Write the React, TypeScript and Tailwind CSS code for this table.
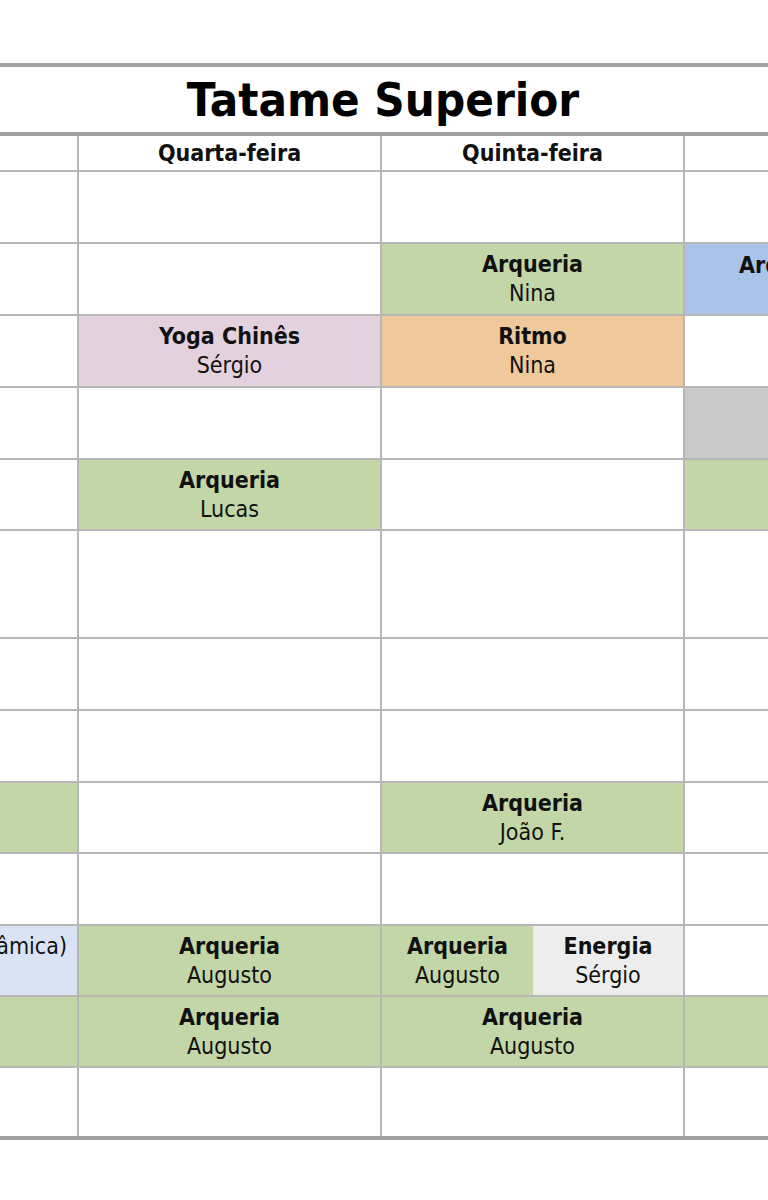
import React from "react";

type Slot = {
  bg?: string;
  title?: string;
  name?: string;
};

type Row = {
  h: string;
  left?: Slot;
  quarta?: Slot;
  quinta?: Slot | [Slot, Slot];
  right?: Slot;
  leftText?: string;
  rightText?: string;
};

const GREEN = "bg-[#c3d6a8]";
const PINK = "bg-[#e3d2dd]";
const ORANGE = "bg-[#efc99b]";
const BLUE = "bg-[#a9c4e8]";
const GRAY = "bg-[#c9c9c9]";
const LIGHT = "bg-[#ededed]";
const LIGHTBLUE = "bg-[#d9e3f3]";

const rows: Row[] = [
  { h: "h-[72px]" },
  {
    h: "h-[72px]",
    quinta: { bg: GREEN, title: "Arqueria", name: "Nina" },
    right: { bg: BLUE },
    rightText: "Arqueria Dinâmica",
  },
  {
    h: "h-[72px]",
    quarta: { bg: PINK, title: "Yoga Chinês", name: "Sérgio" },
    quinta: { bg: ORANGE, title: "Ritmo", name: "Nina" },
  },
  { h: "h-[72px]", right: { bg: GRAY } },
  {
    h: "h-[71px]",
    quarta: { bg: GREEN, title: "Arqueria", name: "Lucas" },
    right: { bg: GREEN },
  },
  { h: "h-[108px]" },
  { h: "h-[72px]" },
  { h: "h-[72px]" },
  {
    h: "h-[71px]",
    left: { bg: GREEN },
    quinta: { bg: GREEN, title: "Arqueria", name: "João F." },
  },
  { h: "h-[72px]" },
  {
    h: "h-[71px]",
    left: { bg: LIGHTBLUE },
    leftText: "Yoga (Dinâmica)",
    quarta: { bg: GREEN, title: "Arqueria", name: "Augusto" },
    quinta: [
      { bg: GREEN, title: "Arqueria", name: "Augusto" },
      { bg: LIGHT, title: "Energia", name: "Sérgio" },
    ],
  },
  {
    h: "h-[71px]",
    left: { bg: GREEN },
    quarta: { bg: GREEN, title: "Arqueria", name: "Augusto" },
    quinta: { bg: GREEN, title: "Arqueria", name: "Augusto" },
    right: { bg: GREEN },
  },
  { h: "h-[68px]" },
];

function Lesson({ slot, className }: { slot?: Slot; className?: string }) {
  return (
    <div
      className={`flex flex-col items-center justify-center text-[23px] leading-[29px] text-[#111] ${
        slot?.bg ?? "bg-white"
      } ${className ?? ""}`}
    >
      {slot?.title && <div className="font-bold">{slot.title}</div>}
      {slot?.name && <div>{slot.name}</div>}
    </div>
  );
}

export default function App() {
  return (
    <div className="w-[768px] h-[1200px] bg-white pt-[63px] overflow-hidden font-['DejaVu_Sans_Condensed','DejaVu_Sans',sans-serif] [font-stretch:semi-condensed] text-[#111]">
      <div className="border-y-4 border-[#a2a2a2]">
        <div className="h-[65px] flex items-center justify-center pb-[1px] pr-[2px]">
          <h1 className="text-[47px] font-bold leading-none text-black">Tatame Superior</h1>
        </div>
        <div className="border-t-4 border-[#a2a2a2]">
          <div className="grid grid-cols-[79px_303px_303px_83px] h-[36px] border-b-2 border-[#b7b7b7]">
            <div className="border-r-2 border-[#b7b7b7]" />
            <div className="border-r-2 border-[#b7b7b7] flex items-center justify-center text-[23px] font-bold">
              Quarta-feira
            </div>
            <div className="border-r-2 border-[#b7b7b7] flex items-center justify-center text-[23px] font-bold">
              Quinta-feira
            </div>
            <div />
          </div>

          {rows.map((row, i) => (
            <div
              key={i}
              className={`grid grid-cols-[79px_303px_303px_83px] ${row.h} ${
                i < rows.length - 1 ? "border-b-2 border-[#b7b7b7]" : ""
              }`}
            >
              {/* Terça-feira column, mostly cut off */}
              <div
                className={`border-r-2 border-[#b7b7b7] overflow-hidden flex justify-end pt-[6px] pr-[10px] whitespace-nowrap text-[23px] leading-[29px] ${
                  row.left?.bg ?? "bg-white"
                }`}
              >
                {row.leftText}
              </div>

              <div className="border-r-2 border-[#b7b7b7] flex">
                <Lesson slot={row.quarta} className="flex-1" />
              </div>

              <div className="border-r-2 border-[#b7b7b7] grid grid-cols-[151px_150px]">
                {Array.isArray(row.quinta) ? (
                  <>
                    <Lesson slot={row.quinta[0]} />
                    <Lesson slot={row.quinta[1]} />
                  </>
                ) : (
                  <Lesson slot={row.quinta} className="col-span-2" />
                )}
              </div>

              {/* Sexta-feira column, cut off at the right edge */}
              <div
                className={`overflow-hidden whitespace-nowrap pt-[7px] pl-[54px] text-[23px] leading-[29px] font-bold ${
                  row.right?.bg ?? "bg-white"
                }`}
              >
                {row.rightText}
              </div>
            </div>
          ))}
        </div>
      </div>
    </div>
  );
}
